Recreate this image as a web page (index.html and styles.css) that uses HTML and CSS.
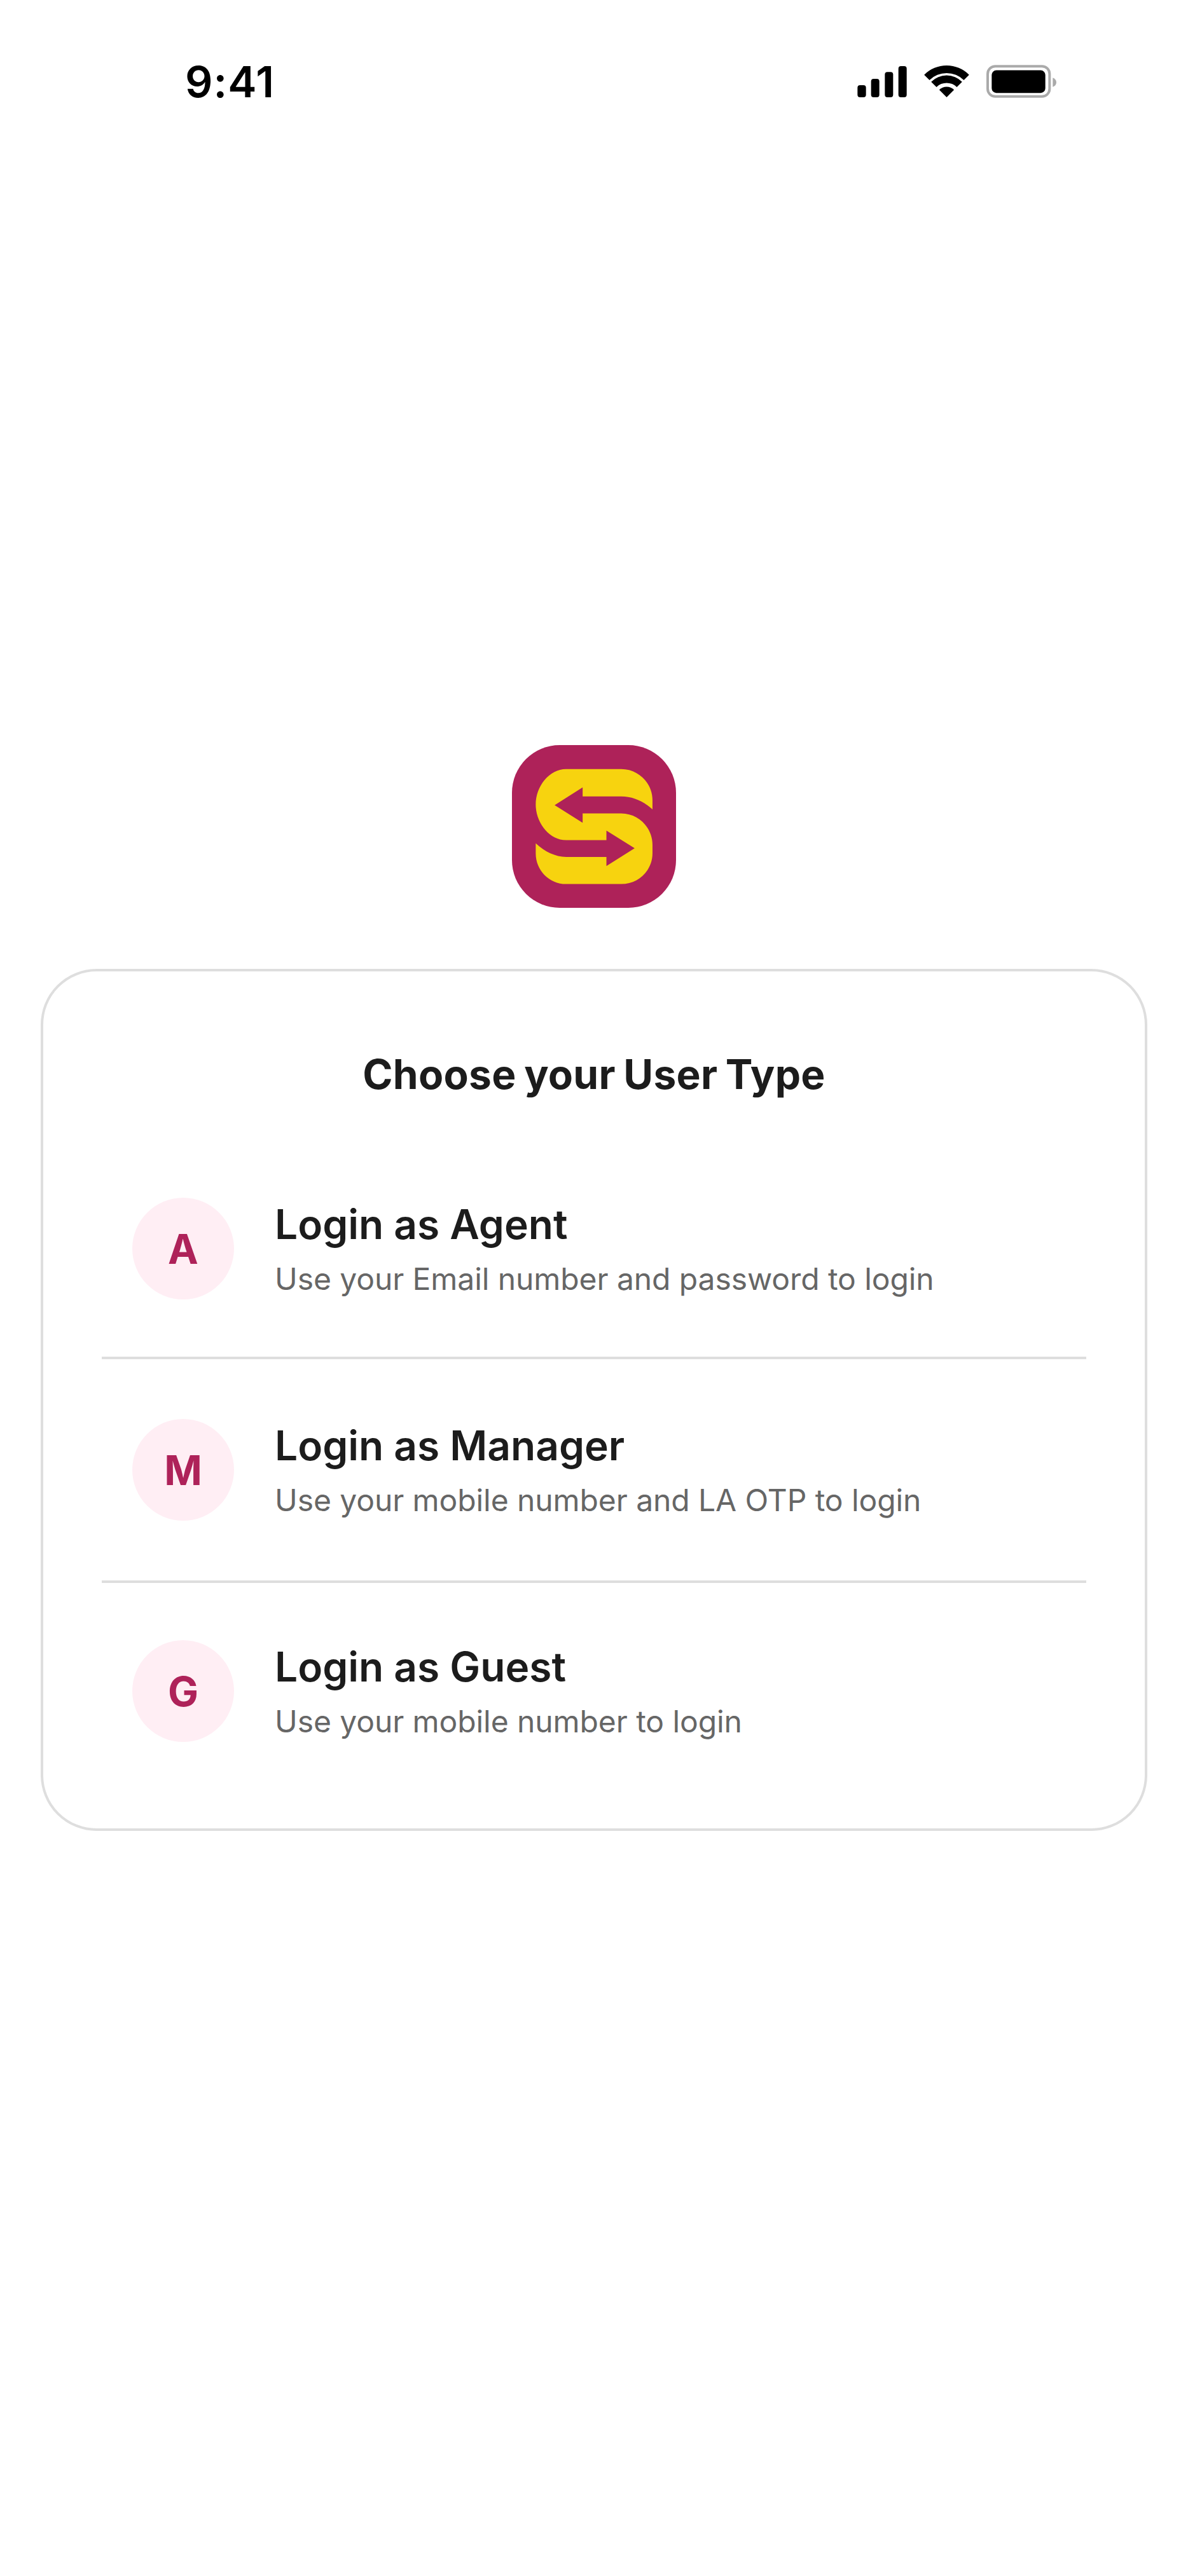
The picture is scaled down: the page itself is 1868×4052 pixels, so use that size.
FILE: index.html
```html
<!DOCTYPE html>
<html lang="en">
<head>
  <meta charset="UTF-8" />
  <title>Choose your User Type</title>
  <link rel="stylesheet" href="styles.css">
</head>
<body>
  <div class="status-bar">
    <span class="time">9:41</span>
    <div class="status-icons">
      <svg class="icon-signal" viewBox="88 70 232 147">
        <rect x="88" y="160" width="40" height="57" rx="12" />
        <rect x="152" y="130" width="39" height="87" rx="12" />
        <rect x="217" y="98" width="39" height="119" rx="12" />
        <rect x="281" y="70" width="39" height="147" rx="12" />
      </svg>
      <svg class="icon-wifi" viewBox="399 68 212 150">
        <path d="M399 112A150 150 0 0 1 611 112L586 137A115 115 0 0 0 424 137Z" />
        <path d="M432 145A103 103 0 0 1 578 145L553 170A68 68 0 0 0 457 170Z" />
        <path d="M470 183A50 50 0 0 1 540 183L505 218Z" />
      </svg>
      <svg class="icon-battery" viewBox="692 65 330 155">
        <rect x="698" y="71" width="292" height="143" rx="36" fill="none" stroke="#aaaaaa" stroke-width="12" />
        <rect x="717" y="90" width="253" height="107" rx="22" />
        <path d="M1005 125C1016 129 1022 137 1022 147C1022 157 1016 165 1005 169Z" fill="#aaaaaa" />
      </svg>
    </div>
  </div>

  <div class="logo-wrap">
    <svg class="logo" viewBox="75 65 773 767">
      <rect x="75" y="65" width="773" height="767" rx="225" fill="#ae2259" />
      <path fill="#f7d30f" d="M330 178H590C672 178 737 245 737 325V368C695 330 645 307 590 307H408V264L276 348L408 431V387H590C672 387 737 455 737 535V575C737 655 672 720 590 720H330C250 720 187 655 187 575V528C230 568 280 592 330 592H520V635L653 551L520 468V513H330C250 513 187 430 187 345C187 260 250 178 330 178Z" />
    </svg>
  </div>

  <div class="card">
    <h1>Choose your User Type</h1>

    <div class="option">
      <div class="avatar">A</div>
      <div class="option-text">
        <div class="option-title">Login as Agent</div>
        <div class="option-sub">Use your Email number and password to login</div>
      </div>
    </div>

    <div class="option">
      <div class="avatar">M</div>
      <div class="option-text">
        <div class="option-title">Login as Manager</div>
        <div class="option-sub">Use your mobile number and LA OTP to login</div>
      </div>
    </div>

    <div class="option">
      <div class="avatar">G</div>
      <div class="option-text">
        <div class="option-title">Login as Guest</div>
        <div class="option-sub">Use your mobile number to login</div>
      </div>
    </div>
  </div>
</body>
</html>
```

FILE: styles.css
```css
body {
  margin: 0;
  height: 4052px;
  background: #ffffff;
  color: #1c1c1c;
  font-family: Inter, "Liberation Sans", sans-serif;
  overflow: hidden;
}

.status-bar {
  display: flex;
  justify-content: space-between;
  align-items: center;
  height: 50px;
  padding: 103px 207px 0 291px;
}

.time {
  font-size: 68px;
  font-weight: 600;
  line-height: 50px;
  letter-spacing: 1px;
  color: #000000;
}

.status-icons {
  display: flex;
  align-items: center;
  gap: 27px;
}

.icon-signal {
  width: 78px;
  height: 49px;
}

.icon-wifi {
  width: 71px;
  height: 50px;
}

.icon-battery {
  width: 110px;
  height: 52px;
}

.logo-wrap {
  display: flex;
  justify-content: center;
  margin-top: 1019px;
}

.logo {
  display: block;
  width: 258px;
  height: 256px;
}

.card {
  margin: 96px 64px 0;
  padding: 122px 92px 0;
  height: 1356px;
  box-sizing: border-box;
  border: 4px solid #dedede;
  border-radius: 88px;
}

h1 {
  margin: 0 0 60px;
  font-size: 64px;
  font-weight: 700;
  line-height: 80px;
  letter-spacing: 0.3px;
  word-spacing: -3px;
  text-align: center;
}

.option {
  display: flex;
  align-items: center;
  gap: 64px;
  padding: 94px 48px;
  border-bottom: 4px solid #dedede;
}

.option:nth-of-type(1) {
  padding-bottom: 90px;
}

.option:last-child {
  padding-top: 90px;
  border-bottom: none;
}

.avatar {
  display: flex;
  align-items: center;
  justify-content: center;
  flex: none;
  width: 160px;
  height: 160px;
  border-radius: 50%;
  background: #ffeef4;
  color: #ae2259;
  font-size: 64px;
  font-weight: 700;
}

.option-title {
  font-size: 64px;
  font-weight: 600;
  line-height: 80px;
}

.option-sub {
  margin-top: 16px;
  font-size: 48px;
  line-height: 60px;
  letter-spacing: -0.08px;
  color: #666666;
}
```
